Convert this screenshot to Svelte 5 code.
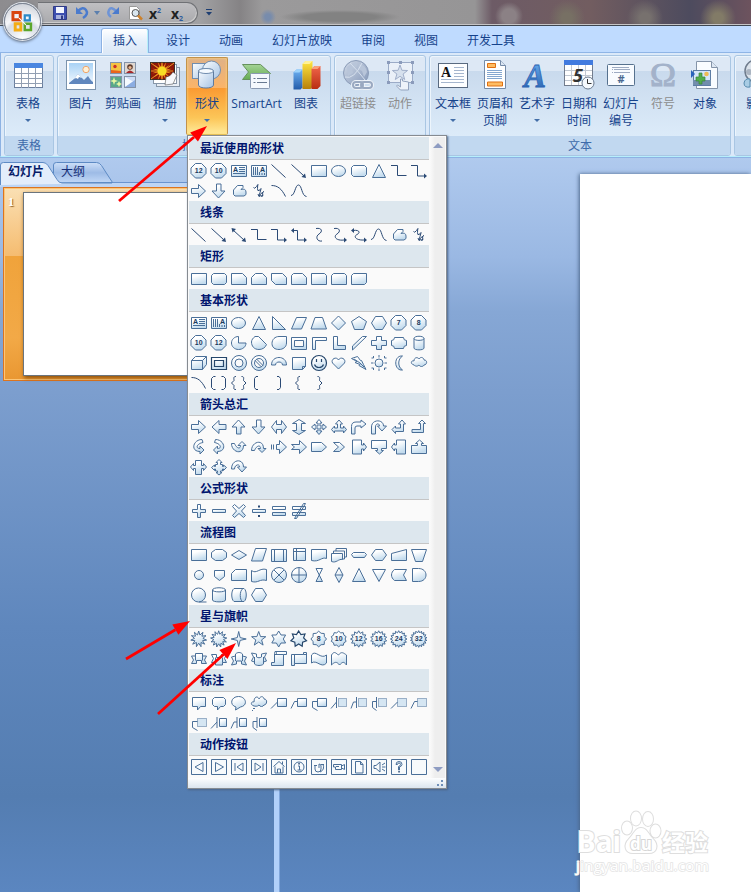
<script>
  const tabs = ["开始", "插入", "设计", "动画", "幻灯片放映", "审阅", "视图", "开发工具"];
  let activeTab = $state("插入");

  const groups = [
    { label: "表格", width: 50, items: [{ icon: "table", text: ["表格"], more: true }] },
    {
      label: "插图",
      width: 274,
      items: [
        { icon: "picture", text: ["图片"] },
        { icon: "clipart", text: ["剪贴画"] },
        { icon: "album", text: ["相册"], more: true },
        { icon: "shapes", text: ["形状"], more: true, open: true },
        { icon: "smartart", text: ["SmartArt"], wide: true },
        { icon: "chart", text: ["图表"] },
      ],
    },
    {
      label: "链接",
      width: 92,
      items: [
        { icon: "link", text: ["超链接"], disabled: true },
        { icon: "action", text: ["动作"], disabled: true },
      ],
    },
    {
      label: "文本",
      width: 302,
      items: [
        { icon: "textbox", text: ["文本框"], more: true },
        { icon: "header", text: ["页眉和", "页脚"] },
        { icon: "wordart", text: ["艺术字"], more: true },
        { icon: "date", text: ["日期和", "时间"] },
        { icon: "number", text: ["幻灯片", "编号"] },
        { icon: "symbol", text: ["符号"], disabled: true },
        { icon: "object", text: ["对象"] },
      ],
    },
    { label: "媒体剪辑", width: 96, items: [{ icon: "media", text: ["影片"], more: true }] },
  ];

  // Path helpers, all in a 20x20 cell.
  const oval = (x, y, r, ry = r) =>
    `M${x - r} ${y}a${r} ${ry} 0 1 0 ${2 * r} 0a${r} ${ry} 0 1 0 ${-2 * r} 0z`;
  const box = (x, y, w, h) => `M${x} ${y}h${w}v${h}h${-w}z`;
  function star(n, R, r, cx = 9.7, cy = 10) {
    let d = "";
    for (let i = 0; i < n * 2; i++) {
      const a = (Math.PI * i) / n - Math.PI / 2;
      const k = i % 2 ? r : R;
      d += `${i ? "L" : "M"}${(cx + k * Math.cos(a)).toFixed(1)} ${(cy + k * Math.sin(a)).toFixed(1)}`;
    }
    return d + "z";
  }

  // f: filled outline, l: open line, s: solid part, p: dotted outline, t: caption
  const F = (f, l) => ({ f, l });
  const L = (l, s) => ({ l, s });
  const OCT = "M6.5 2.5h6l4.5 4.5v5.5l-4.5 4.5h-6l-4.5-4.5V7z";
  const oct = (t) => ({ f: OCT, t });
  const starT = (n, R, r, t) => ({ f: star(n, R, r), t });
  const btn = (l, s) => ({ f: box(2.5, 2.5, 15, 15), l, s, plain: true });
  const HEAD_R = "M15 12.5l3 2.5-3 2.5z";
  const HEAD_L = "M5 3l-3 2.5 3 2.5z";

  const rect = F(box(2.5, 4.5, 15, 11));
  const ellipse = F(oval(9.5, 10, 7, 5.5));
  const round = F("M4.5 4.5h11l2 2v7l-2 2h-11l-2-2v-7z");
  const tri = F("M10 3.5l6.5 13h-13z");
  const textH = { f: box(2.5, 4.5, 15, 11), l: "M10 6.5h6M10 8.5h6M10 10.5h6M4 12.5h12", t: "A", tx: 6.5, ty: 11 };
  const textV = { f: box(2.5, 4.5, 15, 11), l: "M4.5 6v8M6.5 6v8M8.5 6v8M10.5 11v3M13 12v2M15.5 12v2", t: "A", tx: 13.5, ty: 11 };
  const line = L("M2.5 3.5l14 13");
  const lineArrow = L("M2.5 3.5l12 11", "M17 17l-4.5-1 3.500-3.500z");
  const elbow = L("M2 4.5h6.5v10h9");
  const elbowArrow = L("M2 4.5h6.5v10.500h8", HEAD_R);
  const right = F("M2.5 7.5h7v-4l7 6.5-7 6.5v-4h-7z");
  const down = F("M7.5 3v7h-4.5l6.5 7 6.5-7h-4V3z");
  const freeform = F("M4.5 9l4-4.5h5.5v2l-2 2c3-1 5 0 5 2.5v2.5l-2 1.5h-9l-1.5-1.5z");
  const scribble = L("M4.500 6.500q1 2 3-1t1.500-2 -.5 4 1.500 2 2-2-1 4-.500 3 3-3 1-1-1 3-1 2 2-1.500M9 13l1 2.500 2-1");
  const arc = L("M2.5 4.5c6 0 10 3 14 11");
  const curve = L("M2 14.5c4 0 4-10.500 7.500-10.500s3 11 8 11.500");

  const callout = (l, dotted, x = 8.5) => ({
    f: dotted ? undefined : box(x, 5.5, 17.5 - x, 8),
    p: dotted ? box(x, 5.5, 17.5 - x, 8) : undefined,
    l,
  });

  const sections = [
    {
      title: "最近使用的形状",
      icons: [
        oct("12"), oct("10"), textH, textV, line, lineArrow, rect, ellipse, round, tri, elbow, elbowArrow,
        right, down, freeform, scribble, arc, curve,
      ],
    },
    {
      title: "线条",
      icons: [
        line,
        lineArrow,
        L("M4 5l11 10", "M17 17l-4.500-1 3.500-3.500zM2.500 3l4.500 1-3.500 3.500z"),
        elbow,
        elbowArrow,
        L("M4 5.5h4.5v9.5h8", HEAD_R + HEAD_L),
        L("M7 3.5c6-1 7 3 3 5.5s-2 8 3 7"),
        L("M5 3.5c6-1 7 3 3 5.5s-1 7 7 6", HEAD_R),
        L("M4 5.5c6-1 8 2 4 4s-1 6 7 5.5", HEAD_R + HEAD_L),
        curve, freeform, scribble,
      ],
    },
    {
      title: "矩形",
      icons: [
        rect,
        round,
        F("M2.5 4.5h11l4 4v7h-15z"),
        F("M6.5 4.5h7l4 4v7h-15v-7z"),
        F("M2.5 4.5h11l4 4v7h-11l-4-4z"),
        F("M4.5 4.5h9l4 4v7h-15v-9z"),
        F("M2.5 4.5h13l2 2v9h-15z"),
        F("M4.5 4.5h11l2 2v9h-15v-9z"),
        F("M4.5 4.5h13v9l-2 2h-13v-9z"),
      ],
    },
    {
      title: "基本形状",
      icons: [
        textH, textV, ellipse, tri,
        F("M3.5 3.5v13h13z"),
        F("M7.5 4.5h10l-5 11.5h-10z"),
        F("M6 4.5h7.5l4 11.5h-15.5z"),
        F("M9.5 3l7 7-7 7-7-7z"),
        F("M10 3.5l7.5 5-3 8h-9l-3-8z"),
        F("M6.5 3.5h7l4 6.5-4 6.5h-7l-4-6.5z"),
        oct("7"), oct("8"),
        oct("10"), oct("12"),
        F("M9.5 3.5v6.5h7.5c0 4-3.5 6.5-7.5 6.5s-7-3-7-6.5 3-6.5 7-6.5z"),
        F("M6 3.5h3.5l8 8c-1 3-4 5-7.5 5-5 0-7.5-3.5-7.5-7.5 0-2 1.5-4 3.5-5.5z"),
        F("M17.5 3.5v6.5c0 4-3.5 6.5-7.5 6.5s-7-2-7-6 3-7 7-7z"),
        F(box(2.5, 4.5, 15, 12) + box(5.5, 7.5, 9, 6)),
        F("M3.5 4.5h14v3h-11v9h-3z"),
        F("M4.5 3.5h4v9h8v4h-12z"),
        F("M13.5 3.5h4l-14 13.5v-4z"),
        F("M7.5 3.5h5v4h5v5h-5v4h-5v-4h-5v-5h5z"),
        F("M5.5 4.5h9q0 3 3 3v5q-3 0-3 3h-9q0-3-3-3v-5q3 0 3-3z"),
        F("M5 5.5c0-3 10-3 10 0v9.5c0 2.5-10 2.5-10 0z", "M5 5.5c0 2.500 10 2.500 10 0"),
        F("M2.5 7.5l4-4h11v8l-4 5h-11z", "M2.5 7.5h11v9M13.5 7.5l4-4"),
        { f: box(2.5, 4.5, 15, 12), l: box(5.5, 7.5, 9, 6), bold: true },
        F(oval(10, 10, 7.5) + oval(10, 10, 4)),
        F(oval(10, 10, 7.5) + oval(10, 10, 4.5), "M6 7.5l6.5 6.5M7.5 6l6.5 6.5"),
        F("M2.5 12c0-10 15-10 15 0h-4c0-4-7-4-7 0z"),
        F("M3.5 4.5h13v9l-3 3h-10z", "M13.5 16.5v-3h3"),
        { f: oval(10, 10, 7.5), l: "M5.5 11.5c1.5 4 7.5 4 9 0M7.5 6v3M12.5 6v3", bold: true },
        F("M9.5 16l-6-6c-2-4 4-7 6-3 2-4 8-1 6 3z"),
        F("M2.5 5.5l6-2 3 4 1 0 2 4 2.5 5-7-4 1-1-5-2 2-1z", "M5 6l6 4 4 4"),
        F(oval(10, 10, 4), "M10 2v2.5M10 15.5v2.5M2 10h2.5M15.5 10h2.5M4.5 3v2h-2M15.5 3v2h2M4.5 17v-2h-2M15.5 17v-2h2"),
        F("M13.5 3c-9-1-9 15 0 14-5-3-5-11 0-14z"),
        F("M5 12c-4-1-3-5 0-4 0-4 4-4 5-2 2-3 5-1 5 1 4 0 3 5 0 5-1 2-4 2-5 0-2 2-4 1-5 0z"),
        arc,
        L("M6.5 3.5h-2l-2 2v9l2 2h2M12.5 3.5h2l2 2v9l-2 2h-2"),
        L("M7 3.5c-3 0-2 2-2 4l-2.5 2.5 2.5 2.5c0 3-1 4 2 4M12.5 3.5c3 0 2 2 2 4l2.5 2.5-2.5 2.5c0 3 1 4-2 4"),
        L("M9 3.5h-2l-1.5 2v9l1.5 2h2"),
        L("M8 3.5h2l1.5 2v9l-1.5 2h-2"),
        L("M11 3.5c-3 0-2 2-2 4l-2.500 2.500 2.500 2.500c0 3-1 4 2 4"),
        L("M8.500 3.500c3 0 2 2 2 4l2.500 2.500-2.500 2.500c0 3 1 4-2 4"),
      ],
    },
    {
      title: "箭头总汇",
      icons: [
        right,
        F("M17 7.5h-7v-4l-7 6.5 7 6.5v-4h7z"),
        F("M7.5 17v-7h-4.5l6.5-7 6.5 7h-4v7z"),
        down,
        F("M2.5 10l5-6.5v4h5v-4l5 6.5-5 6.5v-4h-5v4z"),
        F("M10 2.5l6.5 4h-4v7h4l-6.5 4-6.5-4h4v-7h-4z"),
        F("M10 2.500l3 3.500h-2v3h3v-2l3.500 3-3.500 3v-2h-3v3h2l-3 3.500-3-3.500h2v-3h-3v2l-3.500-3 3.500-3v2h3v-3h-2z"),
        F("M10 3l3.500 4h-2v4h3v-2l3 3.500-3 3.500v-2h-9v2l-3-3.500 3-3.500v2h3v-4h-2z"),
        F("M2.5 17v-7.5q0-4.5 4.5-4.5h5v-2l5 4-5 4v-2h-4q-2 0-2 2v6z"),
        F("M2.5 17v-7c0-8 12-8 12-1h3l-4.500 5-4.500-5h2c0-3-4-3-4 1v7z"),
        F("M3 12.5l3.5-3.5v2h5v-4h-2l3.5-4 3.5 4h-2v7.5h-8v2z"),
        F("M3 12.5h8.5v-6h-2l3.5-3.5 3.5 3.5h-2v9h-11.500z"),
        F("M13 2.500c-9 0-12 12-2 12v2.500l4-4-4-4v2.500c-5 0-3-5 3-6z"),
        F("M6.500 2.500c9 0 12 12 2 12v2.500l-4-4 4-4v2.500c5 0 3-5-3-6z"),
        F("M2.500 6.500c0 9 12 12 12 2h2.500l-4-4-4 4h2.500c0 4-4 3-6-2z"),
        F("M2.500 13.500c0-9 12-12 12-2h2.500l-4 4-4-4h2.500c0-4-4-3-6 2z"),
        F("M7.5 7.5h3v-4l7 6.5-7 6.5v-4h-3z", "M2.5 7.5v5M4.5 7.5v5"),
        F("M2.5 7.5h8v-4l7 6.5-7 6.5v-4h-8l3-2.500z"),
        F("M2.5 5.5h10l5 4.5-5 4.5h-10z"),
        F("M4.5 5.5h6l5 4.5-5 4.5h-6l5-4.500z"),
        F("M3.5 3h9v5h2v-2l3 4-3 4v-2h-2v5h-9z"),
        F("M2.5 3.5h15v8h-5v2h2l-4 3.5-4-3.5h2v-2h-6z"),
        F("M16.5 3h-9v5h-2v-2l-3 4 3 4v-2h2v5h9z"),
        F("M2.5 16.5h15v-8h-5v-2h2l-4-3.5-4 3.5h2v2h-6z"),
        F("M6.5 3.5h6v5h2v-2l3 3.500-3 3.500v-2h-2v6h-6v-6h-2v2l-3-3.500 3-3.500v2h2z"),
        F("M10 2.500l3 3h-1.500v2h2v2h1v-1.500l3 2.500-3 3v-1.500h-1v2h-2v1.500h1.500l-3 2.500-3-2.500h1.500v-1.500h-2v-2h-1v1.500l-3-3 3-2.500v1.500h1v-2h2v-2h-1.500z"),
        F("M2.500 12c0-10 12-11 12-2h3l-4.500 5-4.500-5h2c0-4-5-2-5 2z"),
      ],
    },
    {
      title: "公式形状",
      icons: [
        F("M8.5 3.5h3v5h5v3h-5v5h-3v-5h-5v-3h5z"),
        F(box(3.5, 8.5, 13, 3)),
        F("M5.5 3.5l4.500 4 4.500-4 2 2-4 4.500 4 4.500-2 2-4.500-4-4.500 4-2-2 4-4.500-4-4.500z"),
        { f: box(3.5, 8.5, 13, 3), s: box(9, 4.5, 2, 2) + box(9, 14, 2, 2) },
        F(box(3.5, 5.5, 13, 3) + box(3.5, 11.5, 13, 3)),
        F(box(3.5, 5.5, 13, 3) + box(3.5, 11.5, 13, 3) + "M14.5 2.5h2l-9 15h-2z"),
      ],
    },
    {
      title: "流程图",
      icons: [
        rect,
        F("M6.5 4.5h7l4 3v5l-4 3h-7l-4-3v-5z"),
        F("M10 5.5l7.5 4.5-7.5 4.5-7.5-4.5z"),
        F("M6.5 3.5h11l-4 12.5h-11z"),
        F(box(2.5, 4.5, 15, 12), "M5.5 4.5v12M14.5 4.5v12"),
        F(box(4.5, 3.5, 12, 12), "M7.5 3.5v12M4.5 6.5h12"),
        F("M2.5 4.5h15v9c-5-2-7 4-15 2z"),
        F("M2.5 8.5h11v6c-4-1-6 4-11 2z", "M4.5 8v-2h11v8h-2M7 6V3.5h10.5V12h-2"),
        F("M4.5 7.5h11l2 2-2 3h-11l-2-3z"),
        F("M6.5 4.5h7l4 5.5-4 5.5h-7l-4-5.5z"),
        F("M2.5 8.5l15-4v11h-15z"),
        F("M2.5 4.5h15l-4 12h-7z"),
        F(oval(10, 10, 4.5)),
        F("M5.5 5.5h10v6l-5 4-5-4z"),
        F("M6.5 4.5h11v11h-15v-7z"),
        F("M2.5 5.5c5 4 8-3 15-1v11c-7-2-8 3-15 1z"),
        F(oval(10, 10, 7.5), "M5 5l10 10M15 5L5 15"),
        F(oval(10, 10, 7.5), "M10 2.5v15M2.5 10h15"),
        F("M7 3.5h6.500l-6.500 13h6.500z"),
        F("M10 2.5l4 7.5-4 7.5-4-7.5z", "M6 10h8"),
        F("M10 3.5l6.5 13h-13z"),
        F("M3.5 4.5h13l-6.5 12z"),
        F("M5.5 4.5h12l-3 5.5 3 5.5h-12c-4-3-4-8 0-11z"),
        F("M3.5 3.5h6c10 0 10 13 0 13h-6z"),
        F(oval(9.5, 10, 7), "M10 17h7.5"),
        F("M3.5 5c0-3 13-3 13 0v10c0 2.5-13 2.5-13 0z", "M3.5 5c0 2.5 13 2.5 13 0"),
        F("M5 3.5h10c3 2 3 11 0 13H5c-3-2-3-11 0-13z", "M13.5 4c-3 2-3 11 0 12.5"),
        F("M6.5 3.5h7l4 6.5-4 6.5h-7l-4-6.5z"),
      ],
    },
    {
      title: "星与旗帜",
      icons: [
        F(star(11, 8, 4.2)),
        F(star(13, 8.2, 4.8)),
        F(star(4, 7.5, 2)),
        F(star(5, 7.5, 3)),
        F(star(6, 8, 4.6)),
        { f: star(7, 8, 5), bold: true },
        starT(8, 7.8, 6.2, "8"),
        starT(10, 7.8, 6.4, "10"),
        starT(12, 8.2, 5.8, "12"),
        starT(14, 8.2, 6, "16"),
        starT(16, 8.3, 6.2, "24"),
        starT(18, 8.3, 6.2, "32"),
        F("M2.5 7h4v-2.5h7v2.5h4l-2 4 2 3.5h-5v-3h-5v3h-5l2-3.500z", "M6.500 7v4.500M13.500 7v4.500"),
        F("M2.5 5.5h5v3h5v-3h5l-2 4 2 4h-4v2.500h-7v-2.500h-4l2-4z", "M6.500 13.500v-5M13.500 13.500v-5"),
        F("M2.5 8l4-1v-2c2-2 5-2 7 0v2l4 1-2 4 2 4-5-1v-3h-5v3l-5 1 2-4z", "M6.500 7v5M13.500 7v5"),
        F("M2.5 4l5 1v3c2 1 3 1 5 0v-3l5-1-2 4 2 4-3 1v2c-2 2-7 2-9 0v-2l-3-1 2-4z", "M5.500 13V8M14.500 13V8"),
        F("M6 2.5h11.5v3h-3v11h-12v-3h3v-9z", "M6 2.5c2 0 2 3 0 3h8.5"),
        F("M2.5 5.5h12v-2h3v11h-12v2h-3z", "M5.5 5.5v9M14.500 5.500h3"),
        F("M2.5 6c4-6 9 5 15 0v8c-5 6-10-4-15 0z"),
        F("M2.5 6c3-5 5-1 7 0 3-4 5-2 8 0v10c-3-4-4-3-7 0-3-4-5-3-8 0z"),
      ],
    },
    {
      title: "标注",
      icons: [
        F("M3.5 4.5h13v9h-5l-3 3.5v-3.5h-5z"),
        F("M5.5 4.5h9l2 2v5l-2 2h-3l-3 3.5v-3.5h-3l-2-2v-5z"),
        F("M7 14c-7-2-5-10.500 2.500-10.500s10 9 2 10.500l-5 3z"),
        F("M5 13c-4-1-3-5 0-4 0-6 4-6 5-3 2-4 5-2 5 0 4 0 3 6 0 6-1 2-4 2-5 0-2 2-4 1-5 1z", "M4 15.500h2M3 17.500h1"),
        callout("M8.5 9L2 15.5"),
        callout("M8.5 8.5h-3L2 15.5"),
        callout("M8.5 8.5h-5v6l5 3"),
        callout("M7.5 4v11M7.5 9L2 15.5", true, 9.5),
        callout("M7.5 4v11M7.5 9h-3L2 15.5", true, 9.5),
        callout("M7.5 4v11M7.5 8.5h-4v6l4 3", true, 9.5),
        callout("M8.5 9L2 15.5", true),
        callout("M8.5 8.5h-3L2 15.5", true),
        callout("M8.5 8.5h-5v6l5 3", true),
        callout("M8 4v11M8 9L2 15.5", false, 10.5),
        callout("M8 4v11M8 9h-3L2 15.5", false, 10.5),
        callout("M8 4v11M8 8.5h-4v6l4 3", false, 10.5),
      ],
    },
    {
      title: "动作按钮",
      icons: [
        btn("M14 5.5v9l-8-4.500z"),
        btn("M6.500 5.5v9l8-4.500z"),
        btn("M14 6v8l-6-4zM6 6v8"),
        btn("M6 6v8l6-4zM14 6v8"),
        btn("M4.500 9.500l5.500-5 5.500 5M6 9.500v6.500h8v-6.500M8.500 16v-4h3v4M13.500 7V4.500"),
        btn(oval(10, 10, 5) + "M9 9h1.500v4M8.500 13h4", box(9.3, 6, 1.5, 1.5)),
        btn("M6 8v4q0 3 3 3t3-3V9q0-2-2-2v4M14 7q2 6-3 8M5 8.5h3M12 7.5h3"),
        btn("M4.500 7.500h8v5h-6v-2.500h-2zM12.500 9l3-1.500v5l-3-1.500M7 9.500h3"),
        btn("M6.500 4.500h5l2.500 3v8.500h-7.500zM11.500 4.500v3H14"),
        btn("M5 8.500h2l4-3.500v10l-4-3.500h-2zM13 8l3-2M13 10h3.500M13 12l3 2"),
        btn("M7 7.500q0-3 3-3t3 3q0 1.500-2.500 2.500v3h-1v-3.500q2-.5 2-2t-1.500-1.500-1.500 1.500z", box(9.3, 14, 1.5, 1.5)),
        btn(),
      ],
    },
  ];

  const pointers = [
    { from: [119, 201], to: [207, 126] },
    { from: [126, 659], to: [190, 621] },
    { from: [158, 714], to: [236, 643] },
  ];
  function arrow({ from: [x1, y1], to: [x2, y2] }) {
    const len = Math.hypot(x2 - x1, y2 - y1);
    const ux = (x2 - x1) / len;
    const uy = (y2 - y1) / len;
    const bx = x2 - ux * 17;
    const by = y2 - uy * 17;
    return {
      shaft: `M${x1} ${y1}L${bx} ${by}`,
      head: `M${x2} ${y2}L${bx - uy * 6} ${by + ux * 6}L${bx + uy * 6} ${by - ux * 6}z`,
    };
  }
</script>

{#snippet icon(name)}
  <svg class="icon" viewBox="0 0 32 32" width="32" height="32">
    {#if name === "table"}
      <rect x="2.5" y="4.5" width="28" height="24" fill="#fff" stroke="#6b7f9e" />
      <rect x="2" y="4" width="29" height="5" fill="#4a86e0" />
      <path d="M2.5 14.5h28M2.5 19.5h28M2.5 24.5h28M9.5 9v20M16.5 9v20M23.5 9v20" stroke="#929fb2" />
    {:else if name === "picture"}
      <rect x="1.5" y="1.5" width="29" height="29" fill="#fff" stroke="#7b93ad" />
      <rect x="4" y="4" width="24" height="21" fill="url(#sky)" />
      <circle cx="21" cy="10.5" r="3.2" fill="#fff0d5" stroke="#eda56b" />
      <path d="M4 24q5-3 9-9 4 4 6 6l4-4q3 5 5 6v2H4z" fill="#6187bd" />
      <path d="M9 20l4-5 4 4-3-1-1 2-2-1z" fill="#fff" />
    {:else if name === "clipart"}
      <g stroke="#8493a8">
        <rect x="3.5" y="3.5" width="11" height="11" fill="#f5c443" />
        <rect x="17.5" y="3.5" width="11" height="11" fill="#dfd7d0" />
        <rect x="3.5" y="17.5" width="11" height="11" fill="#59a889" />
        <rect x="17.5" y="17.5" width="11" height="11" fill="#cddcf6" />
      </g>
      <path d="M4 11l10 1v2H4z" fill="#e8641c" />
      <circle cx="8" cy="7.5" r="1.7" fill="#c9302c" />
      <circle cx="23" cy="8" r="2.8" fill="#5b3a2c" /><circle cx="23" cy="8.5" r="1.6" fill="#e9b690" />
      <path d="M19 14q4-5 8 0z" fill="#a5262a" />
      <path d="M7 18l1 3 3 1-3 1-1 3-1-3-3-1 3-1zM12 22l1 2 2 1-2 1-1 2-1-2-2-1 2-1z" fill="#e8f7a3" />
      <path d="M18 18l9 5-9 5z" fill="#f5faff" />
      <path d="M18 28l10-7v7z" fill="#8bade2" />
    {:else if name === "album"}
      <rect x="7.5" y="8.5" width="23" height="19" fill="#e8edf3" stroke="#8796a8" />
      <rect x="4.5" y="5.5" width="23" height="19" fill="#fff" stroke="#8796a8" />
      <rect x="1.500" y="3.500" width="24" height="17" fill="#8d1608" stroke="#3c3029" />
      <path d={star(14, 10, 4, 13, 12)} fill="#e88518" />
      <path d="M2 4l8 6M2 20l8-6M25 4l-8 6M2 12h22M13 4v16" stroke="#e59a25" />
      <circle cx="13" cy="12" r="4.5" fill="#f7dd24" />
      <path d="M16 26l1-8q4 0 7-5l4 3-4 9z" fill="#f7f9fc" stroke="#555" stroke-width=".6" />
    {:else if name === "shapes"}
      <rect x="1.5" y="4.5" width="16" height="15" fill="url(#glass)" stroke="#718daf" />
      <circle cx="20.500" cy="11" r="9" fill="url(#glass)" stroke="#718daf" />
      <path d="M7.5 12c0-3 15-3 15 0v14c0 4-15 4-15 0z" fill="url(#glass)" stroke="#5f7b9f" />
      <ellipse cx="15" cy="12" rx="7.5" ry="2.5" fill="#f5faff" stroke="#718daf" />
    {:else if name === "smartart"}
      <path d="M1.5 5.5h18l10 9-6 6H1.500l6-7.500z" fill="url(#green)" stroke="#66915d" />
      <rect x="9.5" y="14.5" width="19" height="15" rx="1" fill="#f4f8fd" stroke="#8898b1" />
      <path d="M12.5 19.5h2M12.5 23.5h2M16 19.5h10M16 23.5h10" stroke="#687991" />
    {:else if name === "chart"}
      <path d="M3.5 13.5l3-3h6v18l-2 2h-7z" fill="url(#blue)" />
      <path d="M3.5 13.5l3-3h6l-3 3z" fill="#9dd3fb" />
      <path d="M12.5 5l3-3h7v26l-2 2h-8z" fill="url(#yellow)" />
      <path d="M12.5 5l3-3h7l-3 3z" fill="#fff197" />
      <path d="M21.500 10l3-3h6v20l-3 3h-6z" fill="url(#red)" />
      <path d="M21.500 10l3-3h6l-3 3z" fill="#f8a17b" />
    {:else if name === "link"}
      <circle cx="14" cy="14" r="12.5" fill="url(#grey)" stroke="#8b9cb8" />
      <path d="M5 8q5-4 9-5l1 4-5 3 1 4-5 3zM17 5q7 1 8 8l-3 5-2-6-4-2z" fill="#b8c5d9" />
      <path d="M8 4q9 9 15 17M3 18q9 3 17-14" fill="none" stroke="#d7e1ee" />
      <g fill="none" stroke="#edf2f8" stroke-width="4"><rect x="11" y="23" width="10" height="6" rx="3" /><rect x="19" y="23" width="11" height="6" rx="3" /></g>
      <g fill="none" stroke="#9aa9c1" stroke-width="2"><rect x="11" y="23" width="10" height="6" rx="3" /><rect x="19" y="23" width="11" height="6" rx="3" /></g>
    {:else if name === "action"}
      <rect x="4.5" y="3.5" width="24" height="20" fill="#eaf0f8" stroke="#9babc7" />
      <path d={star(5, 8, 3.3, 16, 14)} fill="#d6e0ed" stroke="#a1afca" />
      <path d="M3 2h3v3H3zM15 2h3v3h-3zM27 2h3v3h-3zM3 12h3v3H3zM27 12h3v3h-3zM3 22h3v3H3zM27 22h3v3h-3z" fill="#8b9bbb" />
      <path d="M16.500 20v8l-3-2-1 1 4 4h8v-8l-6-1v-2z" fill="#eef3fa" stroke="#93a3be" />
    {:else if name === "textbox"}
      <rect x="1.500" y="4.500" width="29" height="24" fill="#fdfeff" stroke="#596a80" />
      <text x="4" y="18" class="serif" font-size="14" fill="#111">A</text>
      <path d="M17 8.500h10M17 11.500h10M17 14.500h10M17 17.500h10M4 20.500h23M4 23.500h23" stroke="#a5b6ce" />
    {:else if name === "header"}
      <path d="M5.5 1.5h16l5 5v23h-21z" fill="#fff" stroke="#748ba9" />
      <path d="M21.5 1.5v5h5" fill="#dce6f2" stroke="#748ba9" />
      <path d="M8.500 4.500h8v4h-8zM8.500 23h15v4h-15z" fill="#ffbc62" stroke="#df7012" />
      <path d="M8 11.500h15M8 13.500h15M8 15.500h15M8 17.500h15M8 19.500h15" stroke="#84a7d0" />
    {:else if name === "wordart"}
      <text x="3" y="28" class="serif" font-size="33" font-style="italic" textLength="22" lengthAdjust="spacingAndGlyphs" fill="url(#blue)" stroke="#2b63b3" stroke-width=".8">A</text>
    {:else if name === "date"}
      <rect x="1.500" y="1.500" width="28" height="25" fill="#fff" stroke="#727c8d" />
      <rect x="1" y="1" width="29" height="5" fill="#427bdf" />
      <path d="M2 11.500h27M2 16.500h27M2 21.500h27M8.500 6v20M15.500 6v20M22.500 6v20" stroke="#c1c8d2" />
      <text x="10" y="23" font-size="18" font-weight="bold" font-style="italic" fill="#333">5</text>
      <circle cx="25" cy="24" r="6" fill="#f5f9fd" stroke="#69798e" />
      <path d="M24.500 20v4.500h4" fill="none" stroke="#333" />
    {:else if name === "number"}
      <rect x="2.500" y="5.500" width="27" height="21" rx="1" fill="#f8fbff" stroke="#56718e" />
      <path d="M7 8.500h17M7 10.500h1M9 10.500h16M7 13.500h1M9 13.500h16" stroke="#9eabc3" />
      <text x="12.500" y="24" font-size="11" font-weight="bold" fill="#4a6991">#</text>
    {:else if name === "symbol"}
      <text x="3" y="27" class="serif thin" font-size="33" textLength="26" lengthAdjust="spacingAndGlyphs" fill="#a3b2ca" stroke="#a3b2ca">Ω</text>
    {:else if name === "object"}
      <path d="M7.500 2.500h15l6 6v21h-21z" fill="#f9fcff" stroke="#8494a9" />
      <path d="M22.500 2.500v6h6" fill="#dce6f2" stroke="#8494a9" />
      <rect x="4.500" y="11.500" width="17" height="15" fill="#d4e5fa" stroke="#5d7da5" />
      <path d="M4 21h18v5H4z" fill="#728ead" />
      <circle cx="17.500" cy="15" r="2.300" fill="#eebc54" />
      <path d="M10 14h3v4h3v4h-3v3h-3v-3H7v-4h3z" fill="#52ad4c" stroke="#398539" stroke-width=".7" />
      <path d="M2 11l4 4-4 4z" fill="#2962bd" />
    {:else if name === "media"}
      <circle cx="14" cy="12" r="11" fill="#dce3eb" stroke="#6f7c8d" stroke-width="1.500" />
      <circle cx="14" cy="12" r="3" fill="#8e99a8" /><circle cx="7" cy="13" r="3" fill="#aab4c1" />
      <path d="M2 24q1-5 6-4v8q-6 1-6-4z" fill="#a8cce4" stroke="#568aad" />
    {/if}
  </svg>
{/snippet}

<div class="window">
  <!-- shared gradients -->
  <svg class="defs" width="0" height="0">
    <defs>
      <linearGradient id="cell" x1="0" y1="0" x2=".4" y2="1"><stop offset=".3" stop-color="#fff" /><stop offset="1" stop-color="#c4dcee" /></linearGradient>
      <linearGradient id="sky" x1="0" y1="0" x2="0" y2="1"><stop stop-color="#a9d2f5" /><stop offset="1" stop-color="#f1f8ff" /></linearGradient>
      <linearGradient id="glass" x1="0" y1="0" x2="1" y2="1"><stop stop-color="#fbfdff" /><stop offset="1" stop-color="#a7c4e5" /></linearGradient>
      <linearGradient id="green" x1="0" y1="0" x2="0" y2="1"><stop stop-color="#a4d396" /><stop offset="1" stop-color="#65ad52" /></linearGradient>
      <linearGradient id="blue" x1="0" y1="0" x2="0" y2="1"><stop stop-color="#6fb3f4" /><stop offset="1" stop-color="#225ba9" /></linearGradient>
      <linearGradient id="yellow" x1="0" y1="0" x2="0" y2="1"><stop stop-color="#ffe640" /><stop offset="1" stop-color="#b88009" /></linearGradient>
      <linearGradient id="red" x1="0" y1="0" x2="0" y2="1"><stop stop-color="#f0664a" /><stop offset="1" stop-color="#b92c12" /></linearGradient>
      <linearGradient id="grey" x1="0" y1="0" x2="1" y2="1"><stop stop-color="#d2dbe8" /><stop offset="1" stop-color="#8396b7" /></linearGradient>
    </defs>
  </svg>

  <header class="titlebar">
    <div class="quick">
      <svg viewBox="0 0 16 16" width="16" height="16"><path d="M1.5 1.5h13v13h-13z" fill="#3d4fb0" stroke="#303b86" /><path d="M4 2h8v6H4z" fill="#f3f6ff" /><path d="M4 10h8v4H4z" fill="#a8b2de" /><path d="M9 10.5h2V14H9z" fill="#303b86" /></svg>
      <svg viewBox="0 0 16 16" width="16" height="16"><path d="M4 6q5-5 8-1t-3 8" fill="none" stroke="#4b7bcd" stroke-width="2.5" /><path d="M2 2v7h7z" fill="#4b7bcd" /></svg>
      <svg class="tiny" viewBox="0 0 6 4" width="6" height="4"><path d="M0 0h6L3 4z" fill="#5b7fae" /></svg>
      <svg viewBox="0 0 16 16" width="16" height="16"><path d="M11 6q-5-5-7-1t2 7" fill="none" stroke="#6e94d6" stroke-width="2.5" /><path d="M14 2v7H7z" fill="#4b7bcd" /></svg>
      <svg viewBox="0 0 16 16" width="16" height="16"><path d="M2.5 1.5h7l3 3v10h-10z" fill="#fff" stroke="#999" /><circle cx="8.5" cy="8" r="3.5" fill="#d9e6ee" stroke="#555" /><path d="M11 10.5l4 4" stroke="#cd812b" stroke-width="2.5" /></svg>
      <span class="script">x<sup>2</sup></span>
      <span class="script">x<sub>2</sub></span>
    </div>
    <svg class="customize" viewBox="0 0 6 8" width="6" height="8"><path d="M0 .5h6" stroke="#1d3e72" /><path d="M0 3h6L3 6.5z" fill="#1d3e72" /></svg>
  </header>

  <button class="orb" type="button" aria-label="Office">
    <svg viewBox="0 0 24 24" width="27" height="27" fill="none" stroke-width="2.600">
      <path d="M10 4H3.500v6.500H10z" stroke="#d9450f" />
      <path d="M14 6.500h4.500V11H14z" stroke="#2b8ac9" stroke-width="2" />
      <path d="M5.500 14h5v5.500h-5z" stroke="#f4ac14" />
      <path d="M14 14h5.500v5.500H14z" stroke="#5ca62b" stroke-width="2.200" />
      <path d="M9 9l6 6" stroke="#fff" stroke-width="1" />
    </svg>
  </button>

  <nav class="tabs">
    {#each tabs as tab (tab)}
      <button type="button" class="tab" class:active={tab === activeTab} onclick={() => (activeTab = tab)}>{tab}</button>
    {/each}
  </nav>

  <div class="ribbon">
    {#each groups as group (group.label)}
      <section class="group" style:width="{group.width}px">
        <div class="tools">
          {#each group.items as item (item.icon)}
            <button type="button" class="tool" class:wide={item.wide} class:open={item.open} disabled={item.disabled}>
              {@render icon(item.icon)}
              {#each item.text as row}<span>{row}</span>{/each}
              {#if item.more}<i class="caret"></i>{/if}
            </button>
          {/each}
        </div>
        <footer>{group.label}</footer>
      </section>
    {/each}
  </div>

  <div class="workspace">
    <aside class="pane">
      <div class="pane-tabs">
        <svg viewBox="0 0 120 24" width="120" height="24">
          <path d="M53.5 22V4q0-2.500 3-2.500h40q3 0 5 3l11 17z" fill="url(#paneTab)" stroke="#5d8ac4" />
          <path d="M.5 24V4q0-2.500 3-2.500H43q3 0 5 3l9 14q2 3.500 5 3.500h50" fill="#e3edfb" stroke="#5d8ac4" />
          <linearGradient id="paneTab" x1="0" y1="0" x2="0" y2="1"><stop stop-color="#cddff8" /><stop offset=".5" stop-color="#9dbbe6" /><stop offset="1" stop-color="#c3d9f7" /></linearGradient>
          <text x="8" y="15" class="bold">幻灯片</text>
          <text x="61" y="15">大纲</text>
        </svg>
      </div>
      <div class="slide-item">
        <b>1</b>
        <div class="thumb"></div>
      </div>
    </aside>
    <div class="splitter"></div>
    <main class="stage"><div class="slide"></div></main>
  </div>

  <div class="gallery">
    <div class="gallery-body">
      <div class="list">
        {#each sections as section (section.title)}
          <h3>{section.title}</h3>
          <div class="cells">
            {#each section.icons as shape}
              <svg class="cell" class:heavy={shape.bold} class:plain={shape.plain} viewBox="0 0 20 20" width="20" height="20">
                {#if shape.f}<path class="fill" d={shape.f} />{/if}
                {#if shape.p}<path class="dotted" d={shape.p} />{/if}
                {#if shape.l}<path class="line" class:open-line={!shape.f && !shape.p} d={shape.l} />{/if}
                {#if shape.s}<path class="solid" d={shape.s} />{/if}
                {#if shape.t}<text x={shape.tx ?? 9.7} y={shape.ty ?? 12.3}>{shape.t}</text>{/if}
              </svg>
            {/each}
          </div>
        {/each}
      </div>
      <div class="scroll"><i class="up"></i><i class="down"></i></div>
    </div>
    <div class="grip">
      <svg viewBox="0 0 8 8" width="8" height="8"><path d="M5 1h2v2H5zM1 5h2v2H1zM5 5h2v2H5z" fill="#6f8fb8" /></svg>
    </div>
  </div>

  <svg class="overlay" viewBox="0 0 751 892" width="751" height="892">
    <g class="watermark">
      <text x="577" y="852" font-size="28" font-weight="bold" textLength="44" lengthAdjust="spacingAndGlyphs">Bai</text>
      <ellipse cx="627" cy="828" rx="5" ry="6.5" />
      <ellipse cx="636" cy="818.5" rx="5" ry="7" />
      <ellipse cx="648" cy="819" rx="5" ry="7" />
      <ellipse cx="655.5" cy="831" rx="5" ry="6.5" />
      <path d="M641 828c6 0 7 6 12 11 6 6 4 14-4 14H633c-8 0-10-8-4-14 5-5 6-11 12-11z" />
      <text class="du" x="630" y="850" font-size="18" font-weight="bold" textLength="22" lengthAdjust="spacingAndGlyphs">du</text>
      <text x="662" y="851" font-size="23" font-weight="bold" textLength="46" lengthAdjust="spacingAndGlyphs">经验</text>
      <text class="url" x="576" y="871" font-size="15" textLength="133" lengthAdjust="spacingAndGlyphs">jingyan.baidu.com</text>
    </g>
    {#each pointers as p}
      <path d={arrow(p).shaft} stroke="#f00" stroke-width="2.8" />
      <path d={arrow(p).head} fill="#f00" />
    {/each}
  </svg>
</div>

<style>
  .window {
    position: relative;
    width: 751px;
    height: 892px;
    overflow: hidden;
    display: flex;
    flex-direction: column;
    background: #bfdbff;
    font: 12px/17px "Open Sans", "Noto Sans CJK SC", sans-serif;
    color: #15428b;
  }
  button {
    padding: 0;
    border: 0;
    background: none;
    color: inherit;
    font: inherit;
  }
  .defs,
  .overlay,
  .orb,
  .gallery {
    position: absolute;
  }
  .titlebar {
    box-sizing: border-box;
    display: flex;
    align-items: center;
    height: 26px;
    flex: none;
    padding-left: 38px;
    border-bottom: 1px solid #3e4650;
    box-shadow: inset 0 -1px #c5c4c5;
    background:
      radial-gradient(circle at 509px 16px, #8b8185 0 7px, transparent 14px),
      radial-gradient(circle at 268px 17px, #788cac 0 3px, transparent 8px),
      radial-gradient(ellipse 60px 7px at 340px 17px, #828282 0 60%, transparent),
      radial-gradient(circle at 567px 18px, #777064 0 5px, transparent 18px),
      radial-gradient(circle at 645px 18px, #77716e 0 5px, transparent 18px),
      radial-gradient(circle at 718px 18px, #827b67 0 5px, transparent 18px),
      linear-gradient(90deg, #8d8c8f, #a1a1a3 200px, #858385 240px, #9b9a9b 262px, #969596 475px, #6d5b66 492px, #725d60 590px, #4d4b5e 690px, #6d535e);
  }
  .quick {
    box-sizing: border-box;
    display: flex;
    align-items: center;
    width: 160px;
    height: 22px;
    padding: 1px 0 0 14px;
    gap: 6px;
    border: 1px solid #6f7175;
    border-left: 0;
    border-radius: 0 11px 11px 0;
    background: linear-gradient(#bfbfc2, #aaaaad);
    box-shadow: inset -1px -1px #ccc;
  }
  .quick .tiny {
    margin: 0 -2px;
  }
  .quick svg:nth-of-type(4) {
    margin-left: 1px;
  }
  .script {
    width: 16px;
    color: #222;
    font-size: 14px;
    font-weight: bold;
  }
  .script sup,
  .script sub {
    color: #2d5b9c;
    font-size: 7px;
    line-height: 0;
  }
  .script sub {
    vertical-align: -2px;
  }
  .customize {
    margin-left: 8px;
  }
  .orb {
    left: 4px;
    top: 3px;
    width: 37px;
    height: 37px;
    display: grid;
    place-items: center;
    border-radius: 50%;
    background: radial-gradient(circle at 50% 100%, #fff, #d7dce5 45%, #f6f7fa 55%, #c4c9d2);
    border: 1px solid #7b8595;
    box-shadow: 0 0 0 1px #e2e6ec, 0 1px 3px 1px #5a6678;
    z-index: 1;
  }
  .tabs {
    display: flex;
    gap: 5px;
    height: 26px;
    flex: none;
    padding-left: 48px;
    background: #bfdbff;
    border-bottom: 1px solid #8fb5e6;
  }
  .tab {
    margin-top: 2px;
    height: 25px;
    padding: 0 11px 2px;
    border: 1px solid transparent;
    border-bottom: 0;
    border-radius: 3px 3px 0 0;
  }
  .tab.active {
    border-color: #8db2e3;
    background: linear-gradient(#fff, #e6f0fb 50%, #dce8f6);
    box-shadow: inset 1px 1px #fff, inset -1px 0 #b7f0fa;
  }
  .ribbon {
    display: flex;
    gap: 3px;
    width: 830px;
    height: 104px;
    flex: none;
    padding: 2px 0 0 3px;
    box-sizing: border-box;
    background: #dbe9f9;
    border-bottom: 1px solid #b6eefc;
    border-left: 1px solid #8db2e3;
    box-shadow: 0 1px #8db2e3;
    z-index: 0;
  }
  .group {
    box-sizing: border-box;
    display: flex;
    flex: none;
    flex-direction: column;
    height: 101px;
    border: 1px solid #a9c6e3;
    border-radius: 3px;
    overflow: hidden;
    background: linear-gradient(#dde8f5 0 15px, #c9daed 15px, #dcebf9 80px);
    box-shadow: inset 1px 1px #edf5fc;
  }
  .tools {
    display: flex;
    flex: 1;
    padding-left: 2px;
  }
  .tool {
    display: flex;
    flex-direction: column;
    align-items: center;
    width: 42px;
    flex: none;
    height: 80px;
    padding-top: 3px;
    white-space: nowrap;
  }
  .tool.wide {
    width: 57px;
  }
  .tool .icon {
    flex: none;
    margin-bottom: 4px;
  }
  .tool:disabled {
    color: #8d8d8d;
  }
  .tool.open {
    box-sizing: border-box;
    padding-top: 1px;
    margin-top: 1px;
    height: 78px;
    border: 1px solid #c2924b;
    border-bottom-color: #efc552;
    border-radius: 2px;
    background: linear-gradient(#dfb187, #fbb468 30px, #fa9a32 30px, #fcc658 60px, #ffeb9c);
    box-shadow: inset 0 0 3px #ffda7c;
  }
  .caret {
    margin-top: 7px;
    border: 3px solid transparent;
    border-top-color: #426ea8;
    border-bottom: 0;
  }
  .group footer {
    height: 20px;
    flex: none;
    line-height: 19px;
    text-align: center;
    color: #3e6aaa;
    background: #c1d8f0;
  }
  .serif {
    font-family: "Liberation Serif", serif;
    font-weight: bold;
  }
  .serif.thin {
    font-weight: normal;
  }
  .workspace {
    display: flex;
    flex: 1;
    background: linear-gradient(#b0caee, #9ab8e3 100px, #86a7d5 155px, #7c9ece 235px, #5f87bd 470px, #547db1 640px, #5b86c0);
  }
  .pane {
    width: 274px;
    flex: none;
    padding-top: 4px;
  }
  .pane-tabs {
    height: 26px;
    margin-right: -1px;
    background: linear-gradient(transparent 21px, #6b94ce 21px 22px, #bed5f4 22px);
  }
  .pane-tabs svg {
    display: block;
  }
  .pane-tabs text {
    fill: #172f78;
    font-size: 12px;
  }
  .pane-tabs .bold {
    font-weight: bold;
    fill: #071b68;
  }
  .slide-item {
    display: flex;
    gap: 10px;
    box-sizing: border-box;
    height: 194px;
    margin: 0 2px 0 3px;
    padding: 4px 5px 0 4px;
    border: 1px solid #dc741f;
    box-shadow: inset 0 0 0 1px #fbc678;
    background: linear-gradient(#fae0b4, #f5bc70 68px, #f0a33b 68px, #f2a947 150px, #e99732);
  }
  .slide-item b {
    width: 5px;
    padding-top: 2px;
    color: #fff;
    font-family: "Liberation Serif", serif;
    text-shadow: 1px 1px 1px #98652b;
  }
  .thumb {
    flex: 1;
    height: 182px;
    border: 1px solid #6a747d;
    background: #fff;
    box-shadow: 1px 2px 4px #8c4f0a;
  }
  .splitter {
    width: 5px;
    background: #b1d0fa;
    border-right: 1px solid #7fa5da;
  }
  .stage {
    display: flex;
    flex: 1;
    padding: 17px 0 0 300px;
  }
  .slide {
    flex: 1;
    background: #fff;
    box-shadow: -1px 0 4px #4b6689;
  }
  .gallery {
    left: 187px;
    top: 135px;
    box-sizing: border-box;
    width: 260px;
    height: 654px;
    border: 1px solid #868b91;
    background: #fafafa;
    box-shadow: 1px 1px 2px #4c6487;
  }
  .gallery-body {
    display: flex;
    height: 642px;
    padding: 1px 0 0 1px;
    box-sizing: border-box;
  }
  .list {
    width: 240px;
  }
  h3 {
    box-sizing: border-box;
    height: 23px;
    margin: 0 0 1px;
    padding-left: 11px;
    border-bottom: 1px solid #c5c5c5;
    background: #dde7ee;
    color: #00156e;
    font-size: 12px;
    line-height: 24px;
  }
  .cells {
    display: flex;
    flex-wrap: wrap;
  }
  .cell {
    display: block;
    stroke: #4a6f98;
    fill: none;
  }
  .cell .fill {
    fill: url(#cell);
    fill-rule: evenodd;
  }
  .cell.plain .fill {
    fill: #f7fafc;
  }
  .cell .open-line {
    stroke: #2b4a75;
  }
  .cell .dotted {
    fill: #d5e6f3;
    stroke-dasharray: 1 1;
  }
  .cell .solid {
    fill: #2b4a75;
    stroke: none;
  }
  .cell text {
    fill: #1c3a5e;
    stroke: none;
    font: bold 7px "Liberation Sans", sans-serif;
    text-anchor: middle;
  }
  .heavy {
    stroke: #25466b;
    stroke-width: 1.2;
  }
  .scroll {
    display: flex;
    flex-direction: column;
    align-items: center;
    justify-content: space-between;
    width: 15px;
    margin-left: 1px;
    padding: 6px 0 6px;
    background: linear-gradient(90deg, #fafafa, #eee 5px);
  }
  .scroll i {
    border: 5px solid transparent;
  }
  .scroll .up {
    border-top: 0;
    border-bottom-color: #8e9cc2;
  }
  .scroll .down {
    border-bottom: 0;
    border-top-color: #8e9cc2;
  }
  .grip {
    display: flex;
    justify-content: flex-end;
    height: 10px;
    padding: 1px 2px 0 0;
    box-sizing: border-box;
    background: linear-gradient(#fdfefe, #dbe5ee);
  }
  .overlay {
    left: 0;
    top: 0;
    pointer-events: none;
    fill: none;
  }
  .watermark {
    fill: #fff;
    stroke: #dedede;
    stroke-width: 2px;
    paint-order: stroke;
  }
  .watermark .du {
    fill: #fff;
    stroke: #d6d6d6;
  }
  .watermark .url {
    stroke: #e4e4e4;
    stroke-width: 1.5px;
  }
</style>
